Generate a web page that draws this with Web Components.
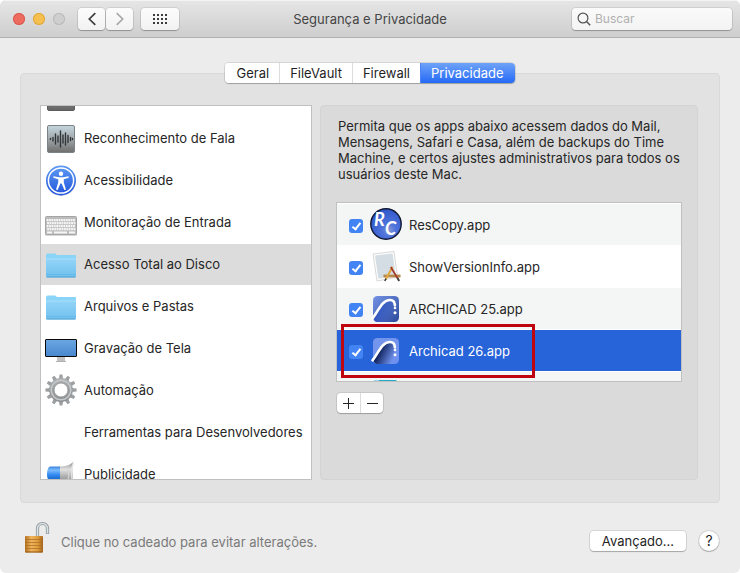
<!DOCTYPE html>
<html lang="pt-BR">
<head>
<meta charset="utf-8">
<title>Segurança e Privacidade</title>
<style>
    html {
        background: #fff;
    }
    body {
        margin: 0;
        font-family: Inter, "Liberation Sans", sans-serif;
        font-size: 13px;
        line-height: 16px;
        color: #262626;
    }
</style>
</head>
<body>

<template id="pref_window_tpl">
    <style>
        :host {
            display: flex;
            flex-direction: column;
            height: 100vh;
            box-sizing: border-box;
            background: #ececec;
            border-radius: 6px;
            overflow: hidden;
        }
        main {
            flex: 1;
            min-height: 0;
            display: flex;
            flex-direction: column;
            padding: 25px 20px 0;
        }
    </style>
    <slot name="toolbar"></slot>
    <main><slot></slot></main>
    <slot name="footer"></slot>
</template>

<template id="title_bar_tpl">
    <style>
        :host {
            display: grid;
            grid-template-columns: 1fr auto 1fr;
            align-items: center;
            height: 37px;
            background: linear-gradient(#e6e6e6, #cecece);
            border-bottom: 1px solid #b1b1b1;
            box-shadow: inset 0 1px #f4f4f4;
        }
        .left, .lights, .nav {
            display: flex;
            align-items: center;
        }
        .left {
            padding-left: 13px;
        }
        .lights {
            gap: 8px;
            margin-right: 13px;
        }
        .nav {
            gap: 1px;
            margin-right: 8px;
        }
        button {
            padding: 0;
            border: 0;
            font: inherit;
        }
        .light {
            width: 12px;
            height: 12px;
            border-radius: 50%;
            background: #ee6b60;
            box-shadow: inset 0 0 0 1px #d9594f;
        }
        .light.min {
            background: #f5c04f;
            box-shadow: inset 0 0 0 1px #dfa73c;
        }
        .light.max {
            background: #cfcfcf;
            box-shadow: inset 0 0 0 1px #b9b9b9;
        }
        .tool {
            display: flex;
            align-items: center;
            justify-content: center;
            width: 27px;
            height: 22px;
            border-radius: 4px;
            background: linear-gradient(#fcfcfc, #f2f2f2);
            box-shadow: 0 0 0 1px #00000014, 0 1px 1px #00000040;
        }
        .tool.wide {
            width: 38px;
        }
        svg {
            display: block;
            fill: none;
        }
        h1 {
            margin: 0;
            font-size: 13px;
            font-weight: 400;
            color: #454545;
        }
        .search {
            justify-self: end;
            display: flex;
            align-items: center;
            gap: 4px;
            box-sizing: border-box;
            width: 160px;
            height: 22px;
            margin-right: 8px;
            padding: 0 5px;
            border-radius: 4px;
            background: linear-gradient(#fafafa, #f3f3f3);
            box-shadow: 0 0 0 1px #00000014, 0 1px 1px #00000040;
        }
        input {
            flex: 1;
            min-width: 0;
            padding: 0;
            border: 0;
            outline: 0;
            background: none;
            font: inherit;
            font-size: 12px;
        }
        input::placeholder {
            color: #b0b0b0;
        }
    </style>
    <div class="left">
        <div class="lights">
            <button class="light" aria-label="Fechar"></button>
            <button class="light min" aria-label="Minimizar"></button>
            <button class="light max" aria-label="Ampliar" disabled></button>
        </div>
        <div class="nav">
            <button class="tool" aria-label="Voltar">
                <svg width="10" height="14" viewBox="0 0 10 14" stroke="#3f3f3f" stroke-width="1.7"><path d="M8.300 1.200 2.300 7l6 5.800"/></svg>
            </button>
            <button class="tool" aria-label="Avançar" disabled>
                <svg width="10" height="14" viewBox="0 0 10 14" stroke="#a9a9a9" stroke-width="1.7"><path d="m1.700 1.200 6 5.800-6 5.800"/></svg>
            </button>
        </div>
        <button class="tool wide" aria-label="Mostrar tudo">
            <svg width="14" height="10" viewBox="0 0 14 10" stroke="#3c3c3c" stroke-width="2" stroke-dasharray="2 2"><path d="M0 1h14M0 5h14M0 9h14"/></svg>
        </button>
    </div>
    <h1><slot></slot></h1>
    <label class="search">
        <svg width="14" height="14" viewBox="0 0 14 14" stroke="#555" stroke-width="1.2"><circle cx="6" cy="6" r="4.900"/><path d="m9.500 9.500 3.700 3.700" stroke-width="1.5"/></svg>
        <input type="search" placeholder="Buscar" aria-label="Buscar">
    </label>
</template>

<template id="tab_bar_tpl">
    <style>
        :host {
            position: relative;
            z-index: 1;
            display: flex;
            align-self: center;
            margin-bottom: -10px;
            border-radius: 4px;
            box-shadow: 0 0 0 1px #00000018, 0 1px 1px #00000038;
            overflow: hidden;
            background: #fff;
        }
        button {
            height: 20px;
            padding: 0 10px;
            border: 0;
            border-left: 1px solid #dcdcdc;
            background: #fff;
            font: inherit;
            color: #1f1f1f;
        }
        button:first-of-type {
            border-left: 0;
            padding-left: 12px;
        }
        button:last-of-type {
            padding-right: 12px;
        }
        button[aria-selected="true"] {
            border-color: #4a83f4;
            background: linear-gradient(#6fa3f8, #2569f6);
            color: #fff;
        }
    </style>
</template>

<template id="group_box_tpl">
    <style>
        :host {
            flex: 1;
            min-height: 0;
            display: grid;
            grid-template-columns: 272fr 378fr;
            grid-template-rows: minmax(0, 1fr);
            gap: 8px;
            box-sizing: border-box;
            padding: 31px 21px 22px 19px;
            border: 1px solid #d9d9d9;
            border-radius: 4px;
            background: #e2e2e2;
        }
    </style>
    <slot></slot>
</template>

<template id="source_list_tpl">
    <style>
        :host {
            min-width: 0;
            display: block;
            box-sizing: border-box;
            border: 1px solid #c0c0c0;
            background: #fff;
            overflow: hidden;
        }
    </style>
    <slot></slot>
</template>

<template id="source_item_tpl">
    <style>
        :host {
            display: flex;
            align-items: center;
            gap: 7px;
            height: 41px;
            margin-bottom: 1px;
            padding-left: 4px;
            white-space: nowrap;
        }
        :host([selected]) {
            background: #dcdcdc;
        }
        :host([partial]) {
            height: 11px;
            align-items: flex-end;
            overflow: hidden;
        }
        :host([partial]) pane-icon {
            margin-bottom: 5px;
        }
        pane-icon {
            margin-bottom: 1px;
        }
        span {
            margin-bottom: 2px;
        }
    </style>
    <pane-icon></pane-icon>
    <span><slot></slot></span>
</template>

<template id="access_panel_tpl">
    <style>
        :host {
            min-width: 0;
            display: flex;
            flex-direction: column;
            box-sizing: border-box;
            padding: 12px 15px 66px;
            border: 1px solid #d3d3d3;
            border-radius: 4px;
            background: #dadada;
        }
        p {
            margin: 0 0 20px 2px;
        }
        .list {
            flex: 1;
            min-height: 0;
            padding-top: 1px;
            border: 1px solid #c0c0c0;
            background: #fff;
            overflow: hidden;
        }
        .edit {
            display: flex;
            align-self: flex-start;
            margin: 11px 0 0 1px;
            border-radius: 4px;
            background: #fff;
            box-shadow: 0 0 0 1px #00000014, 0 1px 1px #00000038;
        }
        button {
            display: flex;
            align-items: center;
            justify-content: center;
            width: 23px;
            height: 20px;
            padding: 0;
            border: 0;
            background: none;
        }
        button + button {
            border-left: 1px solid #dcdcdc;
        }
        svg {
            flex: none;
            stroke: #222;
            stroke-width: 1;
        }
    </style>
    <p><slot name="hint"></slot></p>
    <div class="list"><slot></slot></div>
    <div class="edit">
        <button aria-label="Adicionar"><svg width="11" height="11" viewBox="0 0 11 11"><path d="M0 5.500h11M5.500 0v11"/></svg></button>
        <button aria-label="Remover"><svg width="11" height="11" viewBox="0 0 11 11"><path d="M0 5.500h11"/></svg></button>
    </div>
</template>

<template id="app_row_tpl">
    <style>
        :host {
            position: relative;
            display: block;
            height: 41px;
            border-bottom: 1px solid #fff;
            white-space: nowrap;
        }
        :host(:nth-of-type(odd)) {
            background: #f4f5f5;
        }
        :host([selected]) {
            background: #2864d9;
            color: #fff;
            z-index: 1;
        }
        label {
            display: flex;
            align-items: center;
            gap: 7px;
            height: 100%;
            padding-left: 12px;
        }
        input {
            appearance: none;
            display: grid;
            place-items: center;
            width: 14px;
            height: 14px;
            margin: 3px 0 0;
            border-radius: 3px;
            background: #4384f5;
        }
        input:checked::after {
            content: "";
            width: 3px;
            height: 7px;
            margin-bottom: 2px;
            border: solid #fff;
            border-width: 0 2px 2px 0;
            transform: rotate(38deg);
        }
        pane-icon {
            margin-bottom: 1px;
        }
        .mark {
            display: none;
        }
        :host([marked]) .mark {
            display: block;
            position: absolute;
            left: 4px;
            top: -6px;
            box-sizing: border-box;
            width: 194px;
            height: 54px;
            border: 3px solid #bf0510;
            pointer-events: none;
        }
        :host([partial]) input,
        :host([partial]) span {
            visibility: hidden;
        }
    </style>
    <label><input type="checkbox" checked><pane-icon></pane-icon><span><slot></slot></span></label>
    <div class="mark"></div>
</template>

<template id="window_footer_tpl">
    <style>
        :host {
            display: flex;
            align-items: center;
            box-sizing: border-box;
            height: 70px;
            padding: 6px 21px 0 20px;
        }
        .lock {
            padding: 0;
            border: 0;
            background: none;
            margin: 0 9px 8px 0;
        }
        .note {
            flex: 1;
            padding-top: 2px;
            color: #7a7a7a;
        }
        .push, .help {
            height: 20px;
            padding: 0 12px;
            border: 0;
            background: #fff;
            font: inherit;
            color: #1f1f1f;
            border-radius: 4px;
            box-shadow: 0 0 0 1px #00000018, 0 1px 1px #00000038;
        }
        .help {
            width: 20px;
            margin-left: 13px;
            padding: 0;
            border-radius: 50%;
            font-size: 14px;
        }
    </style>
    <button class="lock" aria-label="Cadeado"><pane-icon name="lock"></pane-icon></button>
    <span class="note"><slot></slot></span>
    <button class="push">Avançado...</button>
    <button class="help" aria-label="Ajuda">?</button>
</template>

<pref-window>
    <title-bar slot="toolbar">Segurança e Privacidade</title-bar>
    <tab-bar tabs="Geral,FileVault,Firewall,Privacidade" current="Privacidade"></tab-bar>
    <group-box>
        <source-list>
            <source-item icon="dark" partial></source-item>
            <source-item icon="speech">Reconhecimento de Fala</source-item>
            <source-item icon="access">Acessibilidade</source-item>
            <source-item icon="keyboard">Monitoração de Entrada</source-item>
            <source-item icon="folder" selected>Acesso Total ao Disco</source-item>
            <source-item icon="folder">Arquivos e Pastas</source-item>
            <source-item icon="display">Gravação de Tela</source-item>
            <source-item icon="gear">Automação</source-item>
            <source-item icon="none">Ferramentas para Desenvolvedores</source-item>
            <source-item icon="megaphone">Publicidade</source-item>
        </source-list>
        <access-panel>
            <span slot="hint">Permita que os apps abaixo acessem dados do Mail, Mensagens, Safari e Casa, além de backups do Time Machine, e certos ajustes administrativos para todos os usuários deste Mac.</span>
            <app-row icon="rescopy">ResCopy.app</app-row>
            <app-row icon="generic">ShowVersionInfo.app</app-row>
            <app-row icon="archicad">ARCHICAD 25.app</app-row>
            <app-row icon="archicad26" selected marked>Archicad 26.app</app-row>
            <app-row icon="teal" partial></app-row>
        </access-panel>
    </group-box>
    <window-footer slot="footer">Clique no cadeado para evitar alterações.</window-footer>
</pref-window>

<script>
    // 12 teeth around the gear ring
    const teeth = Array.from({ length: 12 }, (_, i) =>
        `<path d="M13.900 5 14.600.400h2.800L18.100 5z" transform="rotate(${i * 30} 16 16)"/>`).join('');

    // four rows of key caps
    const keys = [13, 16, 19, 22].map((y, r) =>
        Array.from({ length: 12 }, (_, i) =>
            `<rect x="${1.6 + i * 2.4 + (r % 2) * 0.5}" y="${y}" width="1.9" height="2.2" rx=".3"/>`).join('')).join('');

    const archicad = (from, to, fill) => `
        <defs>
            <linearGradient id="a" x2="1" y2="1"><stop stop-color="${from}"/><stop offset="1" stop-color="${to}"/></linearGradient>
            <linearGradient id="b" x1=".1" y1=".4" x2=".9" y2=".8"><stop offset=".2" stop-color="${fill}"/><stop offset="1" stop-color="${fill}" stop-opacity="0"/></linearGradient>
        </defs>
        <rect x="3" y="4" width="26" height="26" rx="4.500" fill="url(#a)"/>
        <path d="M3.500 26C9 19 12 8 20 8c4 0 5 4 5 9v13H7.500q-3 0-4-4z" fill="url(#b)"/>
        <path d="M2.500 26.300C8 20 11.500 8 20 8c3.300 0 4.800 2.200 4.900 5.300" fill="none" stroke="#fff" stroke-width="2.700" stroke-linecap="round"/>
        <circle cx="25" cy="16" r="1.300" fill="#fff"/><circle cx="25" cy="20.800" r="1.500" fill="#fff"/>`;

    const ICONS = {
        none: '',
        dark: `
            <defs><linearGradient id="a" x2="0" y2="1"><stop stop-color="#999"/><stop offset="1" stop-color="#666"/></linearGradient></defs>
            <rect x="2.500" y="3.500" width="27" height="27" rx="1.500" fill="url(#a)" stroke="#5c5c5c"/>`,
        speech: `
            <defs><linearGradient id="a" x2="0" y2="1"><stop stop-color="#c4d6df"/><stop offset=".5" stop-color="#a0a7aa"/><stop offset="1" stop-color="#6e6e6c"/></linearGradient></defs>
            <rect x="2.500" y="3.500" width="27" height="27" rx="1.500" fill="url(#a)" stroke="#7c8386"/>
            <path d="M5.500 16.500v1M8 15.500v3.500M10.500 12v10M13 14v6M15.500 9v16M18 13v8M20.500 11v12M23 13.500v7M25.500 15.500v3M27.500 16.500v1" stroke="#303436" stroke-width="1.400" stroke-linecap="round"/>`,
        access: `
            <defs><linearGradient id="a" x2="0" y2="1"><stop stop-color="#5f9bf3"/><stop offset="1" stop-color="#2154dc"/></linearGradient></defs>
            <circle cx="16" cy="17" r="15" fill="#d5d8df"/>
            <circle cx="16" cy="16.500" r="15" fill="url(#a)"/>
            <circle cx="16" cy="16.500" r="12.600" fill="none" stroke="#fff" stroke-width="1.500"/>
            <circle cx="16" cy="9.700" r="2.200" fill="#fff"/>
            <path d="m8.500 12.200 5.500 1h4l5.500-1 .3 1.600-5 1.500v3.200l2.200 7-1.600.6-2.800-6.500h-1.200L12.600 26.100l-1.600-.6 2.200-7v-3.200l-5-1.500z" fill="#fff"/>`,
        keyboard: `
            <rect x="0" y="12" width="32" height="18" rx="1" fill="#d9d9d9"/>
            <rect x=".5" y="10.500" width="31" height="18" rx="1" fill="#bdbdbd" stroke="#a5a5a5"/>
            <g fill="#f5f5f5">${keys}</g>
            <path d="M2 26.500h5M9 26.500h13M24 26.500h6" stroke="#f5f5f5" stroke-width="1.800"/>`,
        folder: `
            <defs><linearGradient id="a" x2="0" y2="1"><stop stop-color="#93d4f8"/><stop offset="1" stop-color="#6fc0ee"/></linearGradient></defs>
            <path d="M1 7.500Q1 5.500 2.500 5.500h7.500q1 0 1.800 1.500h18.200q1 0 1 1V20H1z" fill="#8ad4f7"/>
            <path d="M1 11h30v17q0 1.500-1.500 1.500h-27Q1 29.500 1 28z" fill="url(#a)"/>
            <path d="M1 11h30" stroke="#a7dffb"/>
            <path d="M1.500 28.900h29" stroke="#5ba9d6" stroke-width="1.200"/>
            <path d="M1 26.500h30" stroke="#62b4e4" stroke-width=".7"/>`,
        display: `
            <defs><linearGradient id="a" x2="0" y2="1"><stop stop-color="#6ba7e2"/><stop offset="1" stop-color="#4787cf"/></linearGradient></defs>
            <path d="M12 25h8v4h-8z" fill="#c1c1c1"/><path d="M11 29.500h10" stroke="#b1b1b1"/>
            <rect x=".5" y="7.500" width="31" height="17" rx=".5" fill="url(#a)" stroke="#0b0b0b"/>`,
        gear: `
            <defs><linearGradient id="a" gradientUnits="userSpaceOnUse" x1="0" y1="0" x2="0" y2="32"><stop stop-color="#b4b7b9"/><stop offset="1" stop-color="#86898b"/></linearGradient></defs>
            <g fill="#9da0a2">${teeth}</g>
            <circle cx="16" cy="16" r="9.400" fill="none" stroke="url(#a)" stroke-width="5"/>
            <circle cx="16" cy="16" r="9.800" fill="none" stroke="#c5c8ca" stroke-width="1.500"/>
            <circle cx="16" cy="16" r="6.900" fill="none" stroke="#7e8183" stroke-width=".6"/>`,
        megaphone: `
            <defs>
                <linearGradient id="a" x2="0" y2="1"><stop stop-color="#3a83dc"/><stop offset=".25" stop-color="#7bbcff"/><stop offset=".6" stop-color="#2d86ee"/><stop offset="1" stop-color="#1660c4"/></linearGradient>
                <linearGradient id="b" x2="0" y2="1"><stop stop-color="#909090"/><stop offset=".3" stop-color="#e2e2e2"/><stop offset=".6" stop-color="#aaa"/><stop offset="1" stop-color="#777"/></linearGradient>
            </defs>
            <path d="M14 8.500c7 0 10-1 14-4.500v25c-4-4-7-6-14-6z" fill="url(#b)"/>
            <path d="M28.300 4.500q-3 11.500 0 24" fill="none" stroke="#e6e6e6" stroke-width="1.400"/>
            <path d="M22 9q3 6.500 1 13" fill="none" stroke="#d5d5d5" stroke-width="1.200"/>
            <path d="M5 8.500h10V23H5q-3-1-3-7t3-7.500z" fill="url(#a)"/>`,
        rescopy: `
            <defs><radialGradient id="a" cx=".6" cy=".7" r=".7"><stop stop-color="#8498d0"/><stop offset=".3" stop-color="#4f74dc"/><stop offset="1" stop-color="#3057ca"/></radialGradient></defs>
            <circle cx="16" cy="16" r="15.200" fill="url(#a)" stroke="#101832" stroke-width="1.400"/>
            <g fill="#fff" font-family="Lato, sans-serif" font-style="italic" font-weight="700" font-size="18">
                <text x="4" y="18">R</text><text x="15" y="27">C</text>
            </g>`,
        generic: `
            <path d="m3 4 21-2.500 3.500 25.500-20.500 4z" fill="#fcfcfc" stroke="#c9c9c9" stroke-width=".7"/>
            <path d="m5 5.600 17.600-2.100 3 21.900L8.400 28.800z" fill="#d3dde3"/>
            <path d="M13.500 24.500h17v3h-17z" fill="#c79c60"/><path d="M13.500 26h17" stroke="#8c6230" stroke-width=".6"/>
            <path d="m22.500 17-6.700 12" stroke="#e0a63a" stroke-width="2"/>
            <path d="m20.800 17 7.200 12" stroke="#a23a2b" stroke-width="1.700"/>
            <path d="m27.500 28 1.700 3" stroke="#454545" stroke-width="2"/><path d="m16 28.700-1.200 2.300" stroke="#333" stroke-width="1.500"/>`,
        archicad: archicad('#7594e6', '#2d499c', '#3559c0'),
        archicad26: archicad('#7596ec', '#6f90ef', '#10245f'),
        teal: '<path d="M4 5.500q0-1.500 2-1.500h19q2 0 2 1.500V12H4z" fill="#27a9c5"/><path d="M5 4.500h4" stroke="#9bdbe8"/>',
        lock: `
            <defs><linearGradient id="a" x2="1" y2="0"><stop stop-color="#b2701f"/><stop offset=".35" stop-color="#efb45c"/><stop offset=".7" stop-color="#e09c3d"/><stop offset="1" stop-color="#a5651a"/></linearGradient></defs>
            <path d="M17.500 16V7.500a5 5 0 0 1 10 0V13" fill="none" stroke="#8b9499" stroke-width="3.200"/>
            <path d="M17.500 16V7.500a5 5 0 0 1 10 0V12.500" fill="none" stroke="#dbe2e6" stroke-width="1.600"/>
            <rect x="5" y="15" width="18" height="16.500" rx="1" fill="url(#a)"/>
            <path d="M5 18.500h18M5 21.500h18M5 24.500h18M5 27.500h18" stroke="#a96b22" stroke-width=".7"/>
            <path d="M5.500 31h17" stroke="#8f5415"/>`
    };

    class TemplateElement extends HTMLElement {
        constructor() {
            super();
            this.attachShadow({ mode: 'open' });
            const tpl = document.getElementById(this.localName.replace('-', '_') + '_tpl');
            this.shadowRoot.appendChild(tpl.content.cloneNode(true));
        }
    }

    class PaneIconElement extends HTMLElement {
        static get observedAttributes() {
            return ['name'];
        }
        constructor() {
            super();
            this.attachShadow({ mode: 'open' });
        }
        attributeChangedCallback(name, oldValue, newValue) {
            this.shadowRoot.innerHTML = `
                <style>:host { display: block; flex: none; width: 32px; height: 32px; } svg { display: block; }</style>
                <svg width="32" height="32" viewBox="0 0 32 32" aria-hidden="true">${ICONS[newValue] ?? ''}</svg>`;
        }
    }

    // rows pass their icon attribute on to the inner pane-icon
    class IconRowElement extends TemplateElement {
        connectedCallback() {
            this.shadowRoot.querySelector('pane-icon').setAttribute('name', this.getAttribute('icon') ?? 'none');
        }
    }

    class TabBarElement extends TemplateElement {
        connectedCallback() {
            this.setAttribute('role', 'tablist');
            this.getAttribute('tabs').split(',').forEach(name => {
                const tab = document.createElement('button');
                tab.textContent = name;
                tab.setAttribute('role', 'tab');
                tab.setAttribute('aria-selected', name === this.getAttribute('current'));
                tab.addEventListener('click', () => this.select(tab));
                this.shadowRoot.appendChild(tab);
            });
        }
        select(current) {
            this.shadowRoot.querySelectorAll('button').forEach(tab =>
                tab.setAttribute('aria-selected', tab === current));
        }
    }

    customElements.define('pane-icon', PaneIconElement);
    customElements.define('pref-window', class extends TemplateElement {});
    customElements.define('title-bar', class extends TemplateElement {});
    customElements.define('tab-bar', TabBarElement);
    customElements.define('group-box', class extends TemplateElement {});
    customElements.define('source-list', class extends TemplateElement {});
    customElements.define('source-item', class extends IconRowElement {});
    customElements.define('access-panel', class extends TemplateElement {});
    customElements.define('app-row', class extends IconRowElement {});
    customElements.define('window-footer', class extends TemplateElement {});
</script>
</body>
</html>
